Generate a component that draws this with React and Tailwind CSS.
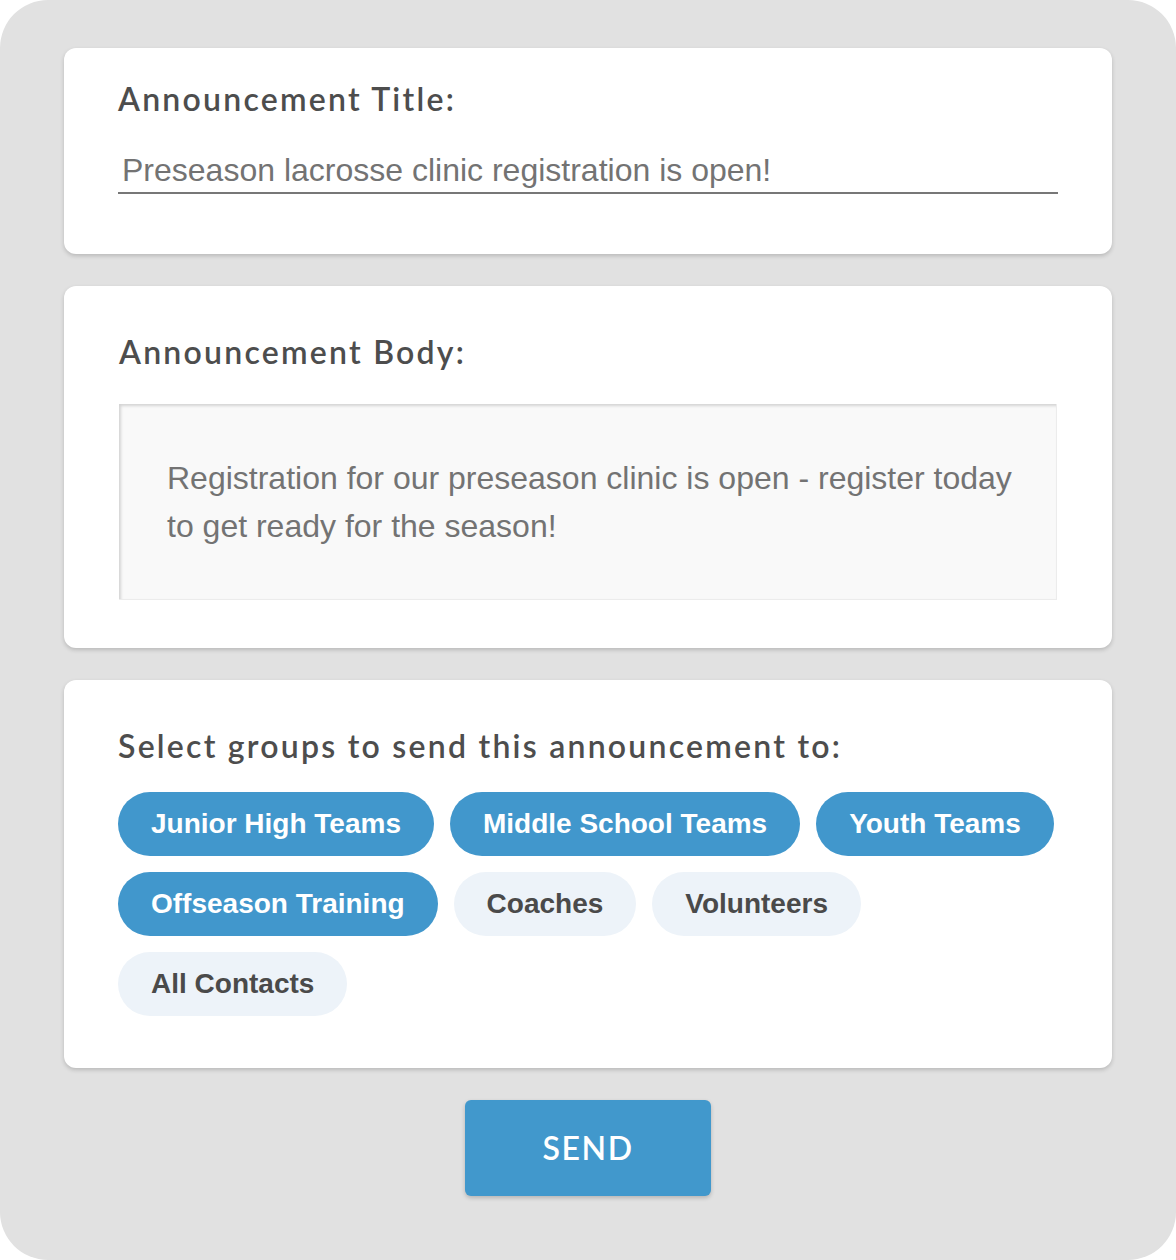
import React from "react";

const heading = "text-[32px] leading-none text-[#4d4d4d] tracking-[0.07em] font-semibold";
const headFont = { fontFamily: "Lato, 'Open Sans', sans-serif" };
const bodyFont = { fontFamily: "'Liberation Sans', Arial, sans-serif" };

function Chip({ label, active }) {
  return (
    <div
      className={
        "h-16 rounded-full px-[33px] flex items-center text-[28px] font-bold " +
        (active ? "bg-[#4197cc] text-white" : "bg-[#edf3f9] text-[#4a4a4a]")
      }
      style={bodyFont}
    >
      {label}
    </div>
  );
}

export default function App() {
  const groups = [
    ["Junior High Teams", true],
    ["Middle School Teams", true],
    ["Youth Teams", true],
    ["Offseason Training", true],
    ["Coaches", false],
    ["Volunteers", false],
    ["All Contacts", false],
  ];
  return (
    <div className="w-[1176px] h-[1260px] bg-white">
      <div className="w-full h-full bg-[#e1e1e1] rounded-[48px] px-16 pt-12 flex flex-col gap-8">
        <div className="bg-white rounded-xl shadow-[0_2px_4px_rgba(0,0,0,0.18)] h-[206px] px-[54px] pt-[35px]">
          <div className={heading} style={headFont}>Announcement Title:</div>
          <div
            className="mt-[36px] border-b-2 border-[#777777] pl-[4px] pb-[3px] text-[32px] leading-[38px] text-[#737373]"
            style={bodyFont}
          >
            Preseason lacrosse clinic registration is open!
          </div>
        </div>
        <div className="bg-white rounded-xl shadow-[0_2px_4px_rgba(0,0,0,0.18)] h-[362px] px-[55px] pt-[50px]">
          <div className={heading} style={headFont}>Announcement Body:</div>
          <div
            className="mt-[36px] h-[196px] bg-[#f9f9f9] border-r border-b border-[#ececec] shadow-[inset_2px_2px_3px_rgba(0,0,0,0.15)] pl-[48px] pr-[30px] pt-[50px] text-[32px] leading-[48px] text-[#737373]"
            style={bodyFont}
          >
            Registration for our preseason clinic is open - register today to get ready for the season!
          </div>
        </div>
        <div className="bg-white rounded-xl shadow-[0_2px_4px_rgba(0,0,0,0.18)] h-[388px] px-[54px] pt-[50px]">
          <div className={heading} style={headFont}>Select groups to send this announcement to:</div>
          <div className="mt-[30px] flex flex-wrap gap-4">
            {groups.map(([g, a]) => (
              <Chip key={g} label={g} active={a} />
            ))}
          </div>
        </div>
        <div className="flex justify-center">
          <div
            className="w-[246px] h-[96px] rounded-md bg-[#4198cc] shadow-[0_2px_4px_rgba(0,0,0,0.2)] flex items-center justify-center text-white text-[32px] tracking-[0.05em] font-semibold"
            style={headFont}
          >
            SEND
          </div>
        </div>
      </div>
    </div>
  );
}
